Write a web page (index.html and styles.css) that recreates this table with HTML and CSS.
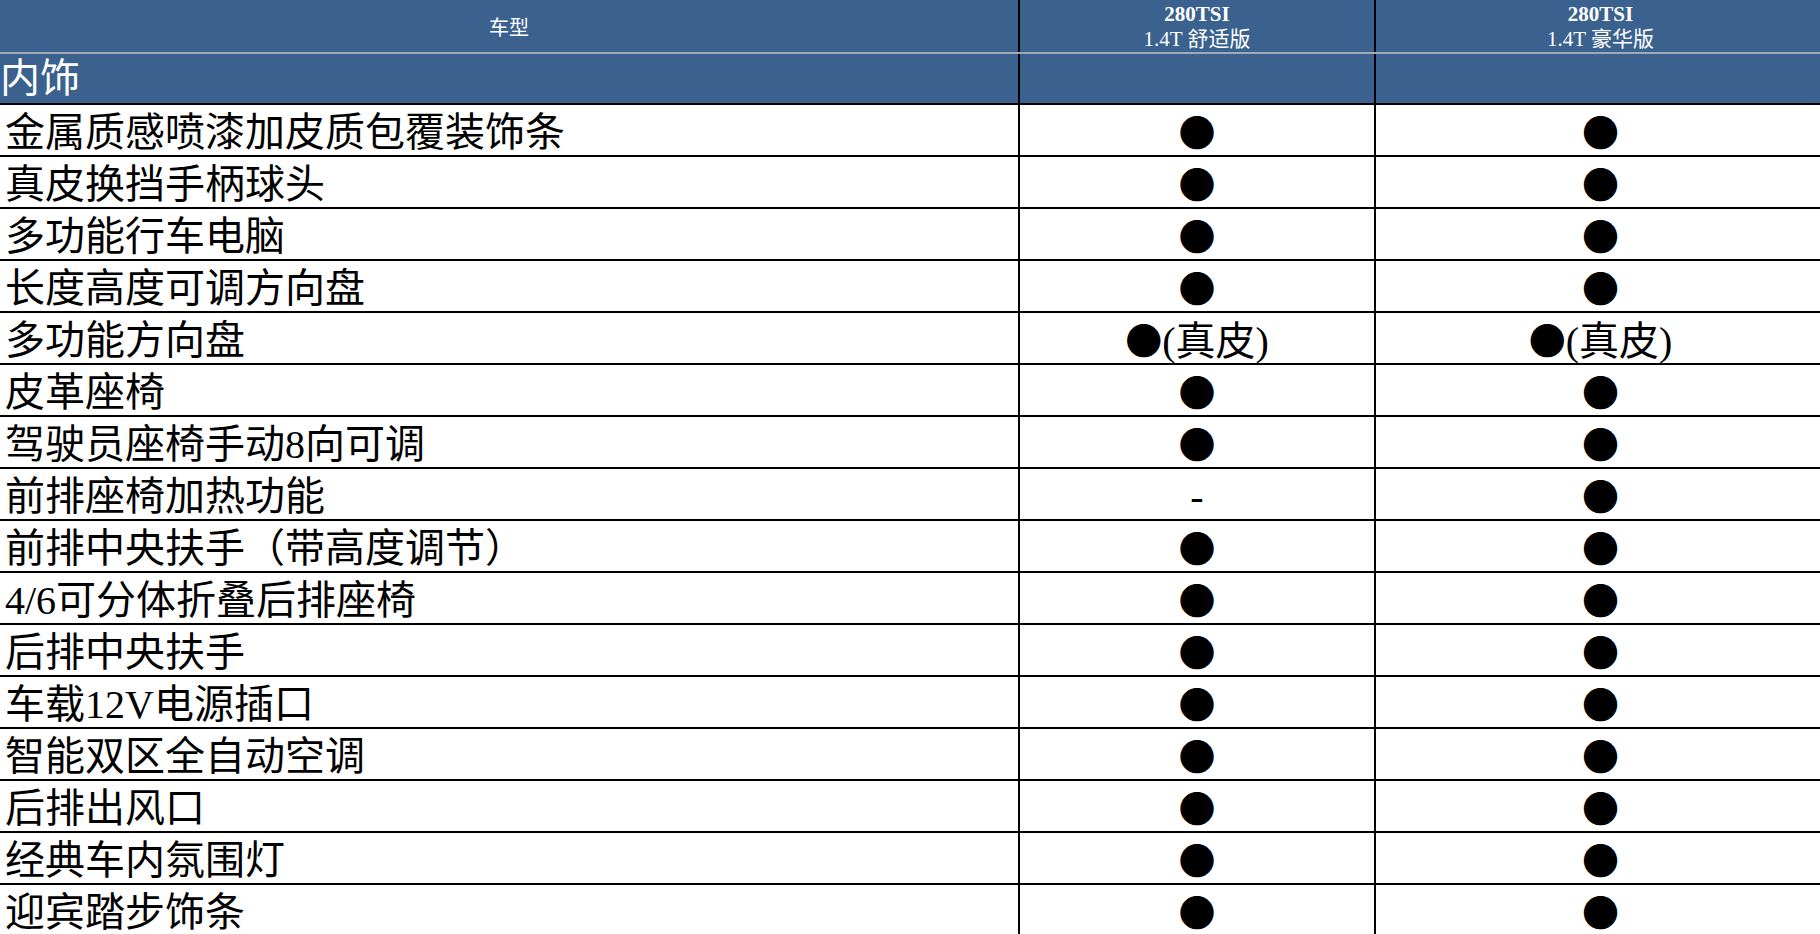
FILE: index.html
```html
<!DOCTYPE html>
<html lang="zh-CN">
<head>
<meta charset="utf-8">
<title>配置表</title>
<link rel="stylesheet" href="styles.css">
</head>
<body>
<table class="spec">
  <colgroup>
    <col class="c-name">
    <col class="c-a">
    <col class="c-b">
  </colgroup>
  <thead>
    <tr class="head">
      <th class="h-name">车型</th>
      <th class="h-model"><div class="m1">280TSI</div><div class="m2">1.4T 舒适版</div></th>
      <th class="h-model"><div class="m1">280TSI</div><div class="m2">1.4T 豪华版</div></th>
    </tr>
    <tr class="section">
      <th class="s-name">内饰</th>
      <th></th>
      <th></th>
    </tr>
  </thead>
  <tbody>
    <tr><td class="name">金属质感喷漆加皮质包覆装饰条</td><td class="val"><span class="dot">●</span></td><td class="val"><span class="dot">●</span></td></tr>
    <tr><td class="name">真皮换挡手柄球头</td><td class="val"><span class="dot">●</span></td><td class="val"><span class="dot">●</span></td></tr>
    <tr><td class="name">多功能行车电脑</td><td class="val"><span class="dot">●</span></td><td class="val"><span class="dot">●</span></td></tr>
    <tr><td class="name">长度高度可调方向盘</td><td class="val"><span class="dot">●</span></td><td class="val"><span class="dot">●</span></td></tr>
    <tr><td class="name">多功能方向盘</td><td class="val"><span class="dot">●</span><span class="note">(真皮)</span></td><td class="val"><span class="dot">●</span><span class="note">(真皮)</span></td></tr>
    <tr><td class="name">皮革座椅</td><td class="val"><span class="dot">●</span></td><td class="val"><span class="dot">●</span></td></tr>
    <tr><td class="name">驾驶员座椅手动8向可调</td><td class="val"><span class="dot">●</span></td><td class="val"><span class="dot">●</span></td></tr>
    <tr><td class="name">前排座椅加热功能</td><td class="val"><span class="dash">-</span></td><td class="val"><span class="dot">●</span></td></tr>
    <tr><td class="name">前排中央扶手（带高度调节）</td><td class="val"><span class="dot">●</span></td><td class="val"><span class="dot">●</span></td></tr>
    <tr><td class="name">4/6可分体折叠后排座椅</td><td class="val"><span class="dot">●</span></td><td class="val"><span class="dot">●</span></td></tr>
    <tr><td class="name">后排中央扶手</td><td class="val"><span class="dot">●</span></td><td class="val"><span class="dot">●</span></td></tr>
    <tr><td class="name">车载12V电源插口</td><td class="val"><span class="dot">●</span></td><td class="val"><span class="dot">●</span></td></tr>
    <tr><td class="name">智能双区全自动空调</td><td class="val"><span class="dot">●</span></td><td class="val"><span class="dot">●</span></td></tr>
    <tr><td class="name">后排出风口</td><td class="val"><span class="dot">●</span></td><td class="val"><span class="dot">●</span></td></tr>
    <tr><td class="name">经典车内氛围灯</td><td class="val"><span class="dot">●</span></td><td class="val"><span class="dot">●</span></td></tr>
    <tr><td class="name">迎宾踏步饰条</td><td class="val"><span class="dot">●</span></td><td class="val"><span class="dot">●</span></td></tr>
  </tbody>
</table>
</body>
</html>
```
FILE: styles.css
```css
html, body {
  margin: 0;
  padding: 0;
  background: #ffffff;
  overflow: hidden;
}

.spec {
  border-collapse: collapse;
  table-layout: fixed;
  width: 1826px;
  font-family: "Liberation Serif", "Noto Sans CJK SC", serif;
  color: #000;
}

.c-name { width: 1019px; }
.c-a { width: 356px; }
.c-b { width: 451px; }

.spec th,
.spec td {
  padding: 0;
  border: 2px solid #000;
  font-weight: normal;
}

.spec tr > :first-child {
  border-left: none;
}

.head {
  height: 53px;
}

.head th {
  border-top: none;
  border-bottom: 2px solid #a3aab6;
  background: #3b618f;
  color: #fff;
  font-size: 20px;
  text-align: center;
  vertical-align: middle;
}

.m1 {
  font-weight: bold;
  font-size: 21px;
  line-height: 26px;
  height: 26px;
}

.m2 {
  font-size: 21px;
  line-height: 24px;
  height: 24px;
}

.section {
  height: 51px;
}

.section th {
  background: #3b618f;
  color: #fff;
  font-size: 40px;
  text-align: left;
  vertical-align: middle;
  line-height: 34px;
}

.s-name {
  padding: 6px 0 0 7px;
}

tbody tr {
  height: 52px;
}

tbody td {
  font-size: 40px;
  line-height: 34px;
  vertical-align: middle;
}

tbody td.name {
  padding: 6px 0 0 5px;
  white-space: nowrap;
}

tbody td.val {
  text-align: center;
  padding-top: 5px;
}

.dot {
  font-family: "Noto Sans CJK SC", sans-serif;
  font-size: 37px;
}

.dash {
  font-size: 40px;
}
```
